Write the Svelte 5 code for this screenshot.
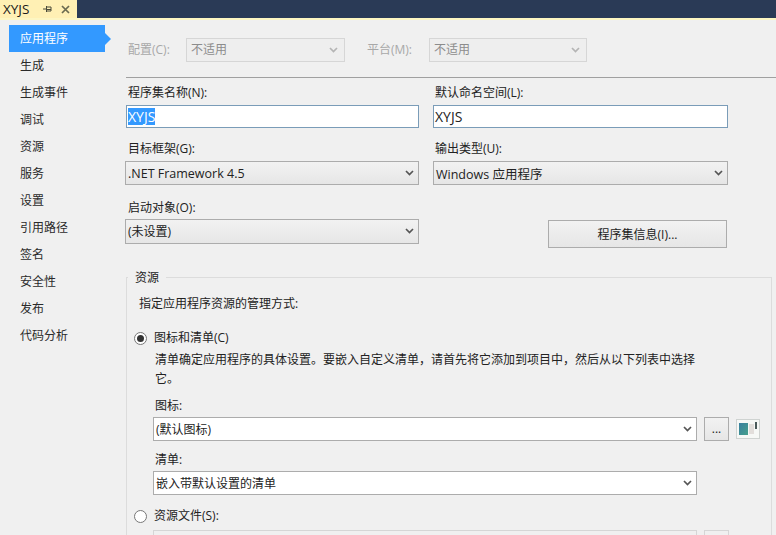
<script>
  const nav = ['应用程序','生成','生成事件','调试','资源','服务','设置','引用路径','签名','安全性','发布','代码分析'];
</script>

<div class="page">
  <header class="tabbar">
    <div class="tab">
      <span class="tabname">XYJS</span>
      <svg class="pin" width="10" height="10" viewBox="0 0 10 10"><path d="M1 5h3M4.500 2v6M4.500 3H9v4H4.500M5 5.500h4" fill="none" stroke="#4a4a3a" stroke-width="1"/></svg>
      <svg class="close" width="9" height="9" viewBox="0 0 9 9"><path d="M1 1l7 7M8 1l-7 7" stroke="#6a6a50" stroke-width="1.700"/></svg>
    </div>
  </header>
  <div class="accent"></div>

  <div class="body">
    <nav class="side">
      {#each nav as item, i}
        <div class="navitem" class:active={i === 0}>{item}</div>
      {/each}
    </nav>

    <main class="main">
      <div class="config">
        <span class="dimlabel l1">配置(C):</span>
        <div class="sel disabled w159"><span>不适用</span>{@render chev()}</div>
        <span class="dimlabel l2">平台(M):</span>
        <div class="sel disabled w158"><span>不适用</span>{@render chev()}</div>
      </div>
      <div class="rule"></div>

      <div class="form">
        <div class="cell r1">
          <div class="lab">程序集名称(N):</div>
          <div class="input"><span class="selected">XYJS</span></div>
        </div>
        <div class="cell r1">
          <div class="lab">默认命名空间(L):</div>
          <div class="input"><span>XYJS</span></div>
        </div>
        <div class="cell r2">
          <div class="lab">目标框架(G):</div>
          <div class="sel pull"><span class="latin">.NET Framework 4.5</span>{@render chev()}</div>
        </div>
        <div class="cell r2">
          <div class="lab">输出类型(U):</div>
          <div class="sel"><span class="latin">Windows 应用程序</span>{@render chev()}</div>
        </div>
        <div class="cell r3">
          <div class="lab">启动对象(O):</div>
          <div class="sel pull"><span>(未设置)</span>{@render chev()}</div>
        </div>
        <div class="cell r3 btncell">
          <button class="btn">程序集信息(I)...</button>
        </div>
      </div>

      <section class="group">
        <div class="legend">资源</div>
        <div class="desc">指定应用程序资源的管理方式:</div>

        <div class="radio first"><span class="dot on"></span><span>图标和清单(C)</span></div>
        <p class="para">清单确定应用程序的具体设置。要嵌入自定义清单，请首先将它添加到项目中，然后从以下列表中选择它。</p>

        <div class="sub">
          <div class="lab2">图标:</div>
          <div class="iconrow">
            <div class="sel white grow"><span>(默认图标)</span>{@render chev()}</div>
            <button class="dots">...</button>
            <svg class="appicon" width="24" height="20" viewBox="0 0 24 20">
              <defs><linearGradient id="ic" x1="0" y1="0" x2="1" y2="1"><stop offset="0" stop-color="#3a7f9f"/><stop offset="1" stop-color="#45a08c"/></linearGradient></defs>
              <rect x="0.500" y="0.500" width="23" height="19" fill="#f6f8f6" stroke="#cfd3d1"/>
              <rect x="3" y="4" width="9" height="12" fill="url(#ic)"/>
              <rect x="13" y="5" width="5" height="10" fill="#e2dedb"/>
              <rect x="19" y="3" width="2" height="7" fill="#4a5a5a"/>
            </svg>
          </div>
          <div class="lab2 second">清单:</div>
          <div class="sel white full"><span>嵌入带默认设置的清单</span>{@render chev()}</div>
        </div>

        <div class="radio last"><span class="dot"></span><span>资源文件(S):</span></div>
        <div class="iconrow cutrow">
          <div class="ghost grow"></div>
          <div class="ghost small"></div>
        </div>
      </section>
    </main>
  </div>
</div>

{#snippet chev()}
  <svg class="chev" width="9" height="6" viewBox="0 0 9 6"><path d="M1 1l3.500 3.500L8 1" fill="none" stroke="currentColor" stroke-width="1.700"/></svg>
{/snippet}

<style>
  :global(body) { margin: 0; background: #f0f0f0; }
  .page {
    width: 776px; height: 535px; overflow: hidden; background: #f0f0f0; color: #222;
    font-family: "Open Sans", "Noto Sans CJK SC", sans-serif; font-size: 12px;
  }
  .tabbar { height: 18px; background: #2a3a56; display: flex; }
  .tab {
    width: 77px; background: #fff0b4; display: flex; align-items: center;
    padding-left: 3px; box-sizing: border-box; color: #1a1a1a;
  }
  .tabname { font-size: 13.500px; width: 39px; }
  .pin { margin-right: 9px; }
  .accent { height: 2px; background: #fdf6c2; }
  .body { display: flex; }
  .side { width: 126px; flex: none; padding: 5px 0 0 9px; box-sizing: border-box; }
  .navitem {
    height: 27px; line-height: 27px; width: 96px; padding-left: 11px; box-sizing: border-box;
    position: relative; color: #2a2a2a;
  }
  .navitem.active { background: #3399ff; color: #fff; }
  .navitem.active::after {
    content: ""; position: absolute; left: 96px; top: 8px;
    border-left: 6px solid #3399ff; border-top: 6px solid transparent; border-bottom: 6px solid transparent;
  }
  .main { width: 650px; flex: none; }
  .config { display: flex; align-items: center; height: 24px; margin-top: 18px; }
  .dimlabel { color: #a8a8a8; padding-bottom: 2px; }
  .l1 { width: 60px; padding-left: 2px; box-sizing: border-box; }
  .l2 { width: 84px; padding-left: 22px; box-sizing: border-box; }
  .rule { height: 1px; background: #a0a0a0; margin-top: 15px; }

  .sel {
    height: 24px; box-sizing: border-box; border: 1px solid #acacac;
    background: linear-gradient(#f2f2f2, #e6e6e6); display: flex; align-items: center;
    justify-content: space-between; padding: 0 4px 0 2px; color: #222;
  }
  .chev { color: #555; flex: none; }
  .sel.disabled { background: #eeeeee; border-color: #d6d6d6; color: #8c8c8c; padding-left: 4px; padding-bottom: 2px; }
  .sel.disabled .chev { color: #b4b4b4; margin-right: 2px; margin-top: 2px; }
  .w159 { width: 159px; }
  .w158 { width: 158px; }
  .sel.white { background: #fff; }
  .latin { font-size: 12.500px; }
  .pull { margin-left: -1px; }

  .form {
    display: grid; grid-template-columns: 293px 295px; column-gap: 14px; margin-top: 7px; width: 602px;
  }
  .cell { display: flex; flex-direction: column; }
  .r2 { margin-top: 13px; }
  .r3 { margin-top: 15px; }
  .lab { height: 14px; line-height: 16px; padding-left: 2px; margin-bottom: 6px; }
  .r3 .lab { margin-bottom: 5px; }
  .r3 .sel { height: 25px; padding-bottom: 1px; }
  .input {
    height: 23px; box-sizing: border-box; border: 1px solid #7a9cb8; background: #fff;
    display: flex; align-items: center; padding-left: 1px; font-size: 14px; line-height: 17px; color: #222;
  }
  .selected { background: #3399ff; color: #fff; }
  .btncell { align-items: flex-end; padding-top: 20px; box-sizing: border-box; }
  .btn {
    width: 179px; height: 28px; font: inherit; color: #222; margin-right: 1px;
    border: 1px solid #acacac; background: linear-gradient(#f2f2f2, #e6e6e6); padding: 0;
  }

  .group {
    margin-top: 29px; border: 1px solid #dcdcdc; border-bottom: 0; height: 300px; width: 646px;
    box-sizing: border-box; position: relative; padding: 18px 0 0 12px;
  }
  .legend { position: absolute; left: 1px; top: -8px; padding: 0 7px; background: #f0f0f0; line-height: 16px; }
  .desc { line-height: 16px; }
  .radio { display: flex; align-items: center; gap: 7px; line-height: 16px; margin-left: -5px; }
  .radio.first { margin-top: 18px; }
  .dot {
    width: 11px; height: 11px; border-radius: 50%; border: 1px solid #777; background: #fff;
    flex: none; box-sizing: content-box; position: relative;
  }
  .dot.on::after {
    content: ""; position: absolute; left: 2px; top: 2px; width: 7px; height: 7px;
    border-radius: 50%; background: #333;
  }
  .para { margin: 4px 0 0 16px; width: 545px; line-height: 19px; font-size: 12px; }
  .sub { margin: 0 0 0 14px; }
  .lab2 { height: 16px; line-height: 16px; margin-top: 10px; padding-left: 2px; margin-bottom: 3px; }
  .lab2.second { margin-top: 11px; margin-bottom: 3px; }
  .iconrow { display: flex; align-items: flex-start; }
  .grow { width: 544px; flex: none; }
  .full { width: 544px; }
  .dots {
    width: 25px; height: 24px; margin-left: 7px; border: 1px solid #acacac; padding: 0;
    background: linear-gradient(#f2f2f2, #e6e6e6); font: inherit; line-height: 1; color: #222;
  }
  .appicon { margin: 2px 0 0 7px; }
  .radio.last { margin-top: 13px; }
  .cutrow { margin: 6px 0 0 14px; }
  .ghost { height: 24px; border: 1px solid #d6d6d6; box-sizing: border-box; }
  .ghost.small { width: 25px; margin-left: 7px; }
</style>
